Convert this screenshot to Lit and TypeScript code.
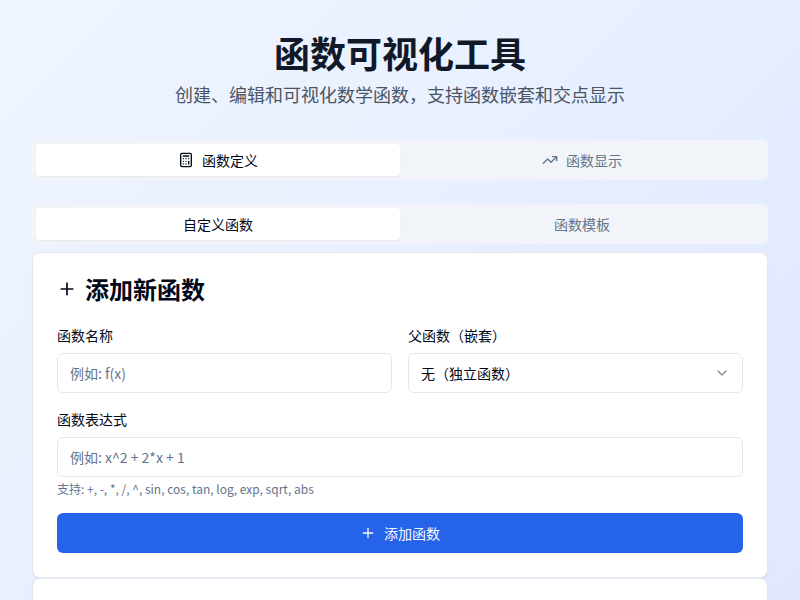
import { LitElement, html, css } from "lit";
import { customElement } from "lit/decorators.js";

const plus = (size: number) => html`<svg class="ico" width=${size} height=${size} viewBox="0 0 24 24" fill="none" stroke="currentColor" stroke-width="2" stroke-linecap="round" stroke-linejoin="round"><path d="M5 12h14"/><path d="M12 5v14"/></svg>`;

@customElement("app-root")
export class AppRoot extends LitElement {
  static styles = css`
    :host {
      display: block;
      height: 600px;
      overflow: hidden;
      background: linear-gradient(135deg, #eff6ff 0%, #e0e7ff 100%);
      font-family: "Noto Sans CJK SC", "Noto Sans", sans-serif;
      color: #020817;
      font-size: 14px;
    }
    .page { padding: 32px; }
    header { text-align: center; margin-bottom: 32px; }
    h1 { margin: 0 0 8px; font-size: 36px; line-height: 40px; font-weight: 700; color: #111827; }
    .sub { margin: 0; font-size: 18px; line-height: 28px; color: #4b5563; }
    .tabs {
      display: grid; grid-template-columns: 1fr 1fr; height: 40px; box-sizing: border-box;
      padding: 4px; background: #f1f5f9; border-radius: 6px;
    }
    .tabs.main { margin-bottom: 24px; }
    .tabs.inner { margin-bottom: 8px; }
    .tab {
      display: flex; align-items: center; justify-content: center; gap: 8px;
      color: #64748b; font-weight: 400; border-radius: 4px; line-height: 20px;
    }
    .tab.on { background: #fff; color: #020817; box-shadow: 0 1px 2px rgba(0,0,0,.05); }
    .card {
      background: #fff; border: 1px solid #e2e8f0; border-radius: 8px;
      box-shadow: 0 1px 2px rgba(0,0,0,.05); padding: 24px;
    }
    .card.next { height: 100px; }
    .title { display: flex; align-items: center; gap: 8px; font-size: 24px; line-height: 24px; font-weight: 700; margin-bottom: 24px; }
    .row { display: grid; grid-template-columns: 1fr 1fr; gap: 16px; margin-bottom: 16px; }
    label { display: block; font-weight: 400; line-height: 20px; margin-bottom: 8px; }
    .field {
      display: flex; align-items: center; justify-content: space-between; height: 40px; box-sizing: border-box;
      padding: 0 12px; border: 1px solid #e2e8f0; border-radius: 6px; background: #fff; line-height: 20px;
    }
    .ph { color: #64748b; }
    .chev { color: #64748b; opacity: .8; margin-top: -1px; }
    .hint { font-size: 12px; line-height: 16px; color: #64748b; margin-top: 4px; }
    .btn {
      display: flex; align-items: center; justify-content: center; gap: 8px; height: 40px; margin-top: 16px;
      background: #2563eb; color: #f8fafc; border-radius: 6px; font-weight: 400;
    }
    .ico { display: block; flex: none; }
  `;

  render() {
    return html`<div class="page">
      <header>
        <h1>函数可视化工具</h1>
        <p class="sub">创建、编辑和可视化数学函数，支持函数嵌套和交点显示</p>
      </header>
      <div class="tabs main">
        <div class="tab on">
          <svg class="ico" width="16" height="16" viewBox="0 0 24 24" fill="none" stroke="currentColor" stroke-width="2" stroke-linecap="round" stroke-linejoin="round"><rect width="16" height="20" x="4" y="2" rx="2"/><line x1="8" x2="16" y1="6" y2="6"/><line x1="16" x2="16" y1="14" y2="18"/><path d="M16 10h.01"/><path d="M12 10h.01"/><path d="M8 10h.01"/><path d="M12 14h.01"/><path d="M8 14h.01"/><path d="M12 18h.01"/><path d="M8 18h.01"/></svg>
          函数定义
        </div>
        <div class="tab">
          <svg class="ico" width="16" height="16" viewBox="0 0 24 24" fill="none" stroke="currentColor" stroke-width="2" stroke-linecap="round" stroke-linejoin="round"><polyline points="22 7 13.5 15.5 8.5 10.5 2 17"/><polyline points="16 7 22 7 22 13"/></svg>
          函数显示
        </div>
      </div>
      <div class="tabs inner">
        <div class="tab on">自定义函数</div>
        <div class="tab">函数模板</div>
      </div>
      <section class="card">
        <div class="title">${plus(20)}添加新函数</div>
        <div class="row">
          <div><label>函数名称</label><div class="field"><span class="ph">例如: f(x)</span></div></div>
          <div><label>父函数（嵌套）</label><div class="field"><span>无（独立函数）</span>
            <svg class="ico chev" width="16" height="16" viewBox="0 0 24 24" fill="none" stroke="currentColor" stroke-width="2" stroke-linecap="round" stroke-linejoin="round"><path d="m6 9 6 6 6-6"/></svg></div></div>
        </div>
        <label>函数表达式</label>
        <div class="field"><span class="ph">例如: x^2 + 2*x + 1</span></div>
        <div class="hint">支持: +, -, *, /, ^, sin, cos, tan, log, exp, sqrt, abs</div>
        <div class="btn">${plus(16)}添加函数</div>
      </section>
      <section class="card next"></section>
    </div>`;
  }
}
